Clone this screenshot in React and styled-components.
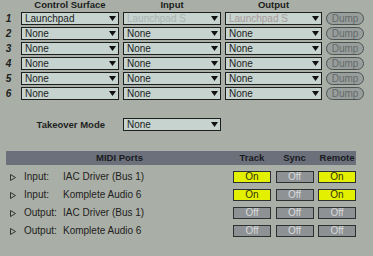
import React from "react";
import styled, { createGlobalStyle } from "styled-components";

const GlobalStyle = createGlobalStyle`
  html, body {
    margin: 0;
    padding: 0;
    background: #a9afa6;
    font-family: "Liberation Sans", Arial, sans-serif;
    color: #1e1f1f;
  }
`;

const Page = styled.div`
  width: 373px;
  height: 256px;
  overflow: hidden;
  background: #a9afa6;
`;

const SurfaceGrid = styled.div`
  display: grid;
  grid-template-columns: 17px 98px 98px 97px 38px;
  grid-auto-rows: 13px;
  grid-template-rows: 10px;
  column-gap: 4px;
  row-gap: 2px;
`;

const ColHead = styled.div`
  font-size: 9.5px;
  font-weight: bold;
  line-height: 10px;
  text-align: center;
  color: #1b1c1c;
`;

const RowNum = styled.div`
  font-size: 10px;
  font-weight: bold;
  font-style: italic;
  line-height: 13px;
  text-align: center;
  color: #202121;
`;

const Select = styled.div`
  box-sizing: border-box;
  height: 13px;
  display: flex;
  align-items: center;
  justify-content: space-between;
  padding: 0 2px 0 3px;
  background: #c6d3cf;
  border: 1px solid #1d1f1f;
  font-size: 10px;
  line-height: 11px;
  color: ${({ $tone }) => $tone || "#1c1d1d"};
  white-space: nowrap;
  overflow: hidden;
`;

const Arrow = () => (
  <svg width="7" height="5" viewBox="0 0 7 5">
    <polygon points="0,0 7,0 3.5,5" fill="#111" />
  </svg>
);

const Dump = styled.div`
  box-sizing: border-box;
  height: 13px;
  border-radius: 7px;
  border: 1px solid #4e5353;
  background: #989e9c;
  color: #656a6a;
  font-size: 10px;
  line-height: 11px;
  text-align: center;
`;

const TakeoverRow = styled.div`
  display: grid;
  grid-template-columns: 17px 98px 98px;
  column-gap: 4px;
  margin-top: 18px;
`;

const TakeoverLabel = styled.div`
  grid-column: 1 / 3;
  justify-self: end;
  margin-right: 14px;
  font-size: 9.5px;
  font-weight: bold;
  line-height: 13px;
`;

const Midi = styled.div`
  margin: 20px 0 0 6px;
  width: 350px;
  display: flex;
  flex-direction: column;
  gap: 6px;
`;

const MidiHeader = styled.div`
  height: 14px;
  display: flex;
  background: #6b707a;
  font-size: 9.5px;
  font-weight: bold;
  line-height: 14px;
  color: #1a1b22;
`;

const HeadTitle = styled.div`
  flex: 1;
  text-align: center;
`;

const Switches = styled.div`
  display: grid;
  grid-template-columns: 38px 38px 38px;
  column-gap: 4.5px;
  width: 123px;
`;

const HeadCell = styled.div`
  text-align: center;
`;

const PortRows = styled.div`
  display: flex;
  flex-direction: column;
  gap: 6px;
`;

const PortRow = styled.div`
  height: 12px;
  display: flex;
  align-items: center;
  font-size: 10px;
  line-height: 12px;
  color: #1f2121;
`;

const Expand = styled.div`
  width: 18px;
  display: flex;
  justify-content: flex-start;
  padding-left: 4px;
  box-sizing: border-box;
`;

const PortType = styled.div`
  width: 39px;
`;

const PortName = styled.div`
  flex: 1;
`;

const Toggle = styled.div`
  box-sizing: border-box;
  height: 12px;
  border: 1px solid #2e3131;
  background: ${({ $on }) => ($on ? "#e3f000" : "#8e9294")};
  color: ${({ $on }) => ($on ? "#30330c" : "#d9dbdb")};
  font-size: 10px;
  line-height: 10px;
  text-align: center;
`;

const Triangle = () => (
  <svg width="6" height="7" viewBox="0 0 6 7">
    <polygon points="0.5,0.5 5.5,3.5 0.5,6.5" fill="none" stroke="#333" strokeWidth="1" />
  </svg>
);

const surfaces = [
  { cs: "Launchpad", input: "Launchpad S", output: "Launchpad S", active: true },
  { cs: "None", input: "None", output: "None" },
  { cs: "None", input: "None", output: "None" },
  { cs: "None", input: "None", output: "None" },
  { cs: "None", input: "None", output: "None" },
  { cs: "None", input: "None", output: "None" },
];

const ports = [
  { type: "Input:", name: "IAC Driver (Bus 1)", track: true, sync: false, remote: true },
  { type: "Input:", name: "Komplete Audio 6", track: true, sync: false, remote: true },
  { type: "Output:", name: "IAC Driver (Bus 1)", track: false, sync: false, remote: false },
  { type: "Output:", name: "Komplete Audio 6", track: false, sync: false, remote: false },
];

const App = () => {
  return (
    <Page>
      <GlobalStyle />
      <SurfaceGrid>
        <div />
        <ColHead>Control Surface</ColHead>
        <ColHead>Input</ColHead>
        <ColHead>Output</ColHead>
        <div />
        {surfaces.map((s, i) => (
          <React.Fragment key={i}>
            <RowNum>{i + 1}</RowNum>
            <Select>
              {s.cs}
              <Arrow />
            </Select>
            <Select $tone={s.active ? "#a9b5b2" : undefined}>
              {s.input}
              <Arrow />
            </Select>
            <Select $tone={s.active ? "#ab9c9c" : undefined}>
              {s.output}
              <Arrow />
            </Select>
            <Dump>Dump</Dump>
          </React.Fragment>
        ))}
      </SurfaceGrid>

      <TakeoverRow>
        <TakeoverLabel>Takeover Mode</TakeoverLabel>
        <Select>
          None
          <Arrow />
        </Select>
      </TakeoverRow>

      <Midi>
        <MidiHeader>
          <HeadTitle>MIDI Ports</HeadTitle>
          <Switches>
            <HeadCell>Track</HeadCell>
            <HeadCell>Sync</HeadCell>
            <HeadCell>Remote</HeadCell>
          </Switches>
        </MidiHeader>
        <PortRows>
          {ports.map((p, i) => (
            <PortRow key={i}>
              <Expand>
                <Triangle />
              </Expand>
              <PortType>{p.type}</PortType>
              <PortName>{p.name}</PortName>
              <Switches>
                <Toggle $on={p.track}>{p.track ? "On" : "Off"}</Toggle>
                <Toggle $on={p.sync}>{p.sync ? "On" : "Off"}</Toggle>
                <Toggle $on={p.remote}>{p.remote ? "On" : "Off"}</Toggle>
              </Switches>
            </PortRow>
          ))}
        </PortRows>
      </Midi>
    </Page>
  );
};

export default App;
